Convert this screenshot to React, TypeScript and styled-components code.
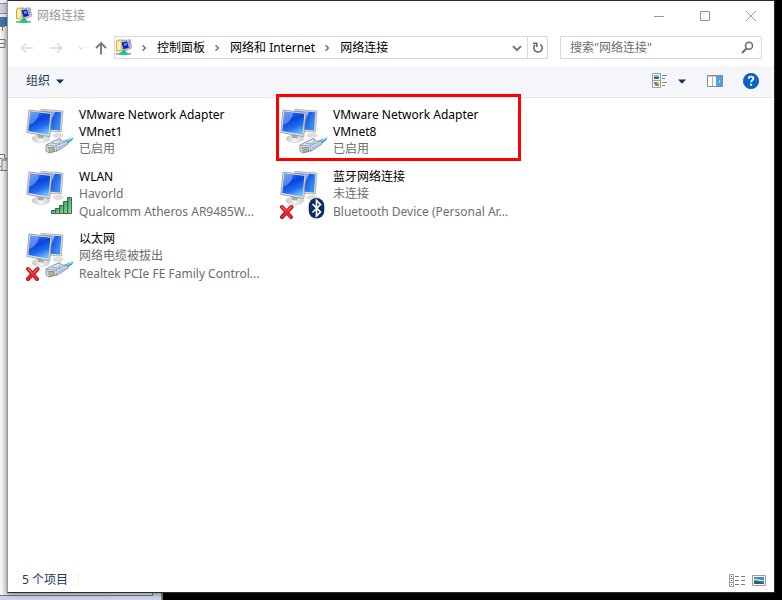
import React from "react";
import styled, { createGlobalStyle } from "styled-components";

const GlobalStyle = createGlobalStyle`
  *, *::before, *::after { box-sizing: border-box; }
  body {
    margin: 0;
    background: #000;
    font-family: "Noto Sans", "Noto Sans CJK SC", sans-serif;
    font-size: 12px;
    color: #000;
  }
  button, input {
    font: inherit;
    color: inherit;
    margin: 0;
    padding: 0;
    border: 0;
    background: transparent;
  }
  svg { display: block; flex: none; }
`;

const Desktop = styled.div`
  position: relative;
  display: flex;
  min-height: 100vh;
  padding: 0 7px 7px 7px;
  background: #000;
  overflow: hidden;
`;

const BackWindow = styled.div`
  position: absolute;
  inset: 0 auto 0 0;
  width: 163px;
  display: flex;
  flex-direction: column;
  background: #ccd4e9;
  border-right: 2px solid #777;
`;

const BackTab = styled.div`
  height: 17px;
  border-top: 3px solid #eef0f5;
  border-bottom: 3px solid #e8ebf2;
  background: #c9d0e2;
  box-shadow: inset 0 1px 0 #8b8f99, inset 0 -1px 0 #8b8f99;
`;

const BackSelection = styled.div`
  height: 9px;
  background: #4173ab;
`;

const BackPane = styled.div`
  flex: 1;
  margin: 0 8px 4px 0;
  border: solid #777b86;
  border-width: 0 1px 1px 0;
  background: linear-gradient(to right, #f8f8f8, #dcdcdc 8px, #e4e4e4);
`;

const Window = styled.main`
  position: relative;
  flex: 1;
  min-width: 0;
  display: flex;
  flex-direction: column;
  background: #fff;
  border: 1px solid #2b2b2d;
  border-left-color: #989898;
  box-shadow: 0 1px 5px rgba(0, 0, 0, 0.45);
`;

const TitleBar = styled.header`
  display: flex;
  align-items: center;
  height: 29px;
  padding-left: 8px;
  gap: 5px;
`;

const Title = styled.h1`
  flex: 1;
  margin: 0;
  font-size: 12px;
  font-weight: 400;
  line-height: 18px;
  color: #999;
`;

const WindowButton = styled.button`
  width: 46px;
  height: 29px;
  display: grid;
  place-items: center;
`;

const WindowButtons = styled.div`
  display: flex;
`;

const NavBar = styled.nav`
  display: flex;
  align-items: center;
  height: 36px;
  padding: 0 12px 1px;
`;

const NavButton = styled.button<{ $width: number; $before?: number }>`
  width: ${(p) => p.$width}px;
  margin-left: ${(p) => p.$before ?? 0}px;
  height: 22px;
  display: grid;
  place-items: center;
`;

const AddressBar = styled.div`
  flex: 1;
  min-width: 0;
  display: flex;
  align-items: center;
  height: 23px;
  margin: 0 12px 0 4px;
  padding-left: 1px;
  border: 1px solid #d9d9d9;
`;

const Crumbs = styled.ol`
  flex: 1;
  min-width: 0;
  display: flex;
  align-items: center;
  margin: 0;
  padding: 0;
  list-style: none;
  white-space: nowrap;
`;

const Crumb = styled.li`
  display: flex;
  align-items: center;
`;

const CrumbLink = styled.a`
  color: #000;
  text-decoration: none;
  line-height: 18px;
`;

const Chevron = styled.span`
  width: 25px;
  padding-right: 2px;
  display: grid;
  place-items: center;
`;

const RefreshButton = styled.button`
  width: 20px;
  height: 21px;
  display: grid;
  place-items: center;
  border-left: 1px solid #d9d9d9;
`;

const SearchBox = styled.label`
  display: flex;
  align-items: center;
  width: 202px;
  height: 23px;
  padding: 0 7px 0 9px;
  border: 1px solid #d9d9d9;
`;

const SearchInput = styled.input`
  flex: 1;
  min-width: 0;
  height: 18px;
  outline: none;
  &::placeholder { color: #6d6d6d; opacity: 1; }
`;

const Toolbar = styled.div`
  display: flex;
  align-items: center;
  height: 32px;
  padding: 0 15px 1px 18px;
  background: #f4f6f9;
  border-bottom: 1px solid #e6e7e9;
`;

const OrganizeButton = styled.button`
  display: flex;
  align-items: center;
  gap: 6px;
  margin-right: auto;
  line-height: 18px;
  color: #1e395b;
`;

const ToolButton = styled.button<{ $gap: number }>`
  margin-left: ${(p) => p.$gap}px;
`;

const Content = styled.section`
  flex: 1;
  padding: 7px 12px 0 16px;
`;

const Connections = styled.ul`
  display: grid;
  grid-template-columns: repeat(auto-fill, 254px);
  grid-auto-rows: 62px;
  margin: 0;
  padding: 0;
  list-style: none;
`;

const Connection = styled.li`
  position: relative;
  display: flex;
  gap: 3px;
`;

const ConnectionText = styled.div`
  flex: 1;
  min-width: 0;
  padding-top: 1px;
`;

const ConnectionName = styled.div`
  max-width: 170px;
  line-height: 17px;
`;

const ConnectionDetail = styled.div`
  max-width: 190px;
  line-height: 18px;
  color: #6d6d6d;
  white-space: nowrap;
`;

const Marker = styled.div`
  position: absolute;
  inset: -11px 11px 6px -2px;
  border: 3px solid #f00;
  pointer-events: none;
`;

const StatusBar = styled.footer`
  display: flex;
  align-items: center;
  height: 24px;
  padding: 0 8px 0 14px;
  color: #1e395b;
`;

const StatusCount = styled.span`
  padding-right: 10px;
  line-height: 14px;
  border-right: 1px solid #f0f0f0;
`;

const ViewButtons = styled.div`
  display: flex;
  align-items: center;
  gap: 6px;
  margin-left: auto;
`;

function NetworkFolderIcon() {
  return (
    <svg width="16" height="17" viewBox="0 0 16 17">
      <path d="M.5 2.500V12h9V2.500L8 1H1.500z" fill="#f7df7d" stroke="#bd9a37" strokeWidth=".8" />
      <path d="M1.500 3h3v8h-3z" fill="#fff2ac" />
      <path d="M6 1.500 14.500.8l1 8.400-5.800 2.300L5.500 10z" fill="#c7cbd5" stroke="#8f949f" strokeWidth=".7" />
      <path d="m5.500 3.500 5.500-1.300 2 6.500-5.500 1.500z" fill="#0d22b8" />
      <path d="m7.500 4.500 3-.8.800 2.500-3 .8z" fill="#5d91ff" />
      <path d="M12 2.500 14.200 2v6l-1.200 1z" fill="#9aa3b5" />
      <path d="M0 14h15v1.800H0z" fill="#9ba8a4" />
      <path d="M6 11.500h3.500v1.500H11v3H4.500v-3H6z" fill="#12c171" />
      <path d="M3 14h9.500v1.500H3z" fill="#15d67f" />
    </svg>
  );
}

function ArrowIcon({ dir }: { dir: "left" | "right" | "up" }) {
  const turn = { left: 0, right: 180, up: 90 }[dir];
  const up = dir === "up";
  return (
    <svg width="14" height="14" viewBox="0 0 14 14">
      <path
        d={up ? "M2 7h11.500M7 2 2 7 7 12" : "M1.500 7H13M6 2.500 1.500 7 6 11.500"}
        transform={`rotate(${turn} 7 7)`}
        fill="none"
        stroke={up ? "#787878" : "#dcdcdc"}
        strokeWidth={up ? 1.9 : 1.6}
      />
    </svg>
  );
}

function SmallChevron({ down, color, size }: { down?: boolean; color: string; size: number }) {
  return (
    <svg width={size} height={size} viewBox="0 0 8 8">
      <path d={down ? "M.8 2.500 4 5.700 7.200 2.500" : "M2.500 1.200 5.300 4 2.500 6.800"} fill="none" stroke={color} strokeWidth="1.600" />
    </svg>
  );
}

function Triangle() {
  return (
    <svg width="8" height="5" viewBox="0 0 8 5">
      <path d="M0 .5h8L4 4.700z" fill="#17305a" />
    </svg>
  );
}

function MonitorPair() {
  return (
    <>
      <ellipse cx="34" cy="30.500" rx="5.500" ry="2.600" fill="#dedede" />
      <path d="M17 4.300 39 6l-1.600 21L17 26z" fill="#dddcd8" stroke="#a3a29e" strokeWidth=".7" />
      <path d="m18.500 5.800 18.800 1.500L36 25.600 19 24z" fill="url(#screenBack)" />
      <path d="m13 28 7.500 1 .5 5h-8z" fill="#b4b4b4" />
      <ellipse cx="16.800" cy="33.800" rx="8.800" ry="3.800" fill="url(#base)" stroke="#c4c4c4" strokeWidth=".5" />
      <path d="m13.500 28.500 6.500 1-.5 4-5.500-.5z" fill="#a9a9a9" />
      <path d="m5 5 22.700 2.700-1.900 24L2.800 27.400z" fill="#e4e3df" stroke="#92918e" strokeWidth=".8" />
      <path d="m6.300 6.500 20 2.300-1.700 21L4.300 26z" fill="url(#screen)" />
      <path d="m6.300 6.500 9 1C14.500 13 11 18 5 20z" fill="#bfe0ff" opacity=".4" />
    </>
  );
}

function Plug() {
  return (
    <g strokeLinejoin="round">
      <path d="m38 38 5-3.500 6.500-2-1.500 3-7 5z" fill="#36a9d7" />
      <path d="m41 37 7-3.500" stroke="#a9e5fa" strokeWidth="1" />
      <path d="m22 40 9-4.500 5-2 1.200 2.500 5.800 0 1 3-9 6-10 3-3-2z" fill="#dbe5f2" stroke="#647b9c" strokeWidth=".8" />
      <path d="m23 40.500 8.500.5 11-4.500M32 41l1 6M28 38.500l7 .5 1-3" fill="none" stroke="#7187a6" strokeWidth=".7" />
      <path d="m33.500 42 9-4 .5 2-9 4.500z" fill="#a8bfdc" />
      <path d="M23.500 42h7l.5 5-6 .5z" fill="#70839c" />
      <path d="M25 42.500v4M27 42.500v4.500M29 42.500v4" stroke="#f0dd80" strokeWidth="1" />
    </g>
  );
}

function Signal() {
  return (
    <g fill="url(#bar)" stroke="#1d6b3a" strokeWidth=".9">
      <path d="M27.500 43.500h4v3h-4z" />
      <path d="M31.500 41.500h4v5h-4z" />
      <path d="M35.500 38.500h4v8h-4z" />
      <path d="M39.500 34.500h4v12h-4z" />
      <path d="M43.500 30.500h4v16h-4z" />
    </g>
  );
}

function Cross() {
  return (
    <g strokeLinecap="round">
      <path d="m4 40 9 10M13.500 40 4 50" stroke="#a60d12" strokeWidth="4" />
      <path d="m4 40 9 10M13.500 40 4 50" stroke="#e8262d" strokeWidth="2.800" />
      <path d="m4 39.800 3.500 3.600M13.300 39.800 10 43.400" stroke="#ff8a86" strokeWidth="1" />
    </g>
  );
}

function Bluetooth() {
  return (
    <>
      <rect x="30.700" y="31" width="15.600" height="20.600" rx="7.800" fill="#0a2d61" />
      <path d="m34.500 37 8 8-4 4V33.500l4 4-8 8" fill="none" stroke="#fff" strokeWidth="1.700" />
    </>
  );
}

type Badge = "plug" | "signal" | "bluetooth";

function ConnectionIcon({ badge, broken }: { badge: Badge; broken?: boolean }) {
  return (
    <svg width="52" height="52" viewBox="0 0 52 52">
      <MonitorPair />
      {badge === "plug" && <Plug />}
      {badge === "signal" && <Signal />}
      {badge === "bluetooth" && <Bluetooth />}
      {broken && <Cross />}
    </svg>
  );
}

function Gradients() {
  return (
    <svg width="0" height="0">
      <defs>
        <linearGradient id="screen" x1=".2" y1="0" x2=".6" y2="1">
          <stop offset="0" stopColor="#2a72ee" />
          <stop offset=".4" stopColor="#0b45dc" />
          <stop offset=".7" stopColor="#1f6df0" />
          <stop offset="1" stopColor="#74bcff" />
        </linearGradient>
        <linearGradient id="screenBack" x1="0" y1="0" x2="1" y2=".5">
          <stop offset="0" stopColor="#3f86f2" />
          <stop offset=".5" stopColor="#8fc2fb" />
          <stop offset=".6" stopColor="#1a5ce6" />
          <stop offset="1" stopColor="#3b8df5" />
        </linearGradient>
        <linearGradient id="base" x1="0" y1="0" x2="1" y2="0">
          <stop offset="0" stopColor="#c4c4c4" />
          <stop offset=".5" stopColor="#f4f4f4" />
          <stop offset="1" stopColor="#cfcfcf" />
        </linearGradient>
        <linearGradient id="bar" x1="0" y1="0" x2="1" y2="1">
          <stop offset="0" stopColor="#35935a" />
          <stop offset="1" stopColor="#a5d8ae" />
        </linearGradient>
      </defs>
    </svg>
  );
}

interface ConnectionData {
  name: string;
  details: string[];
  badge: Badge;
  broken?: boolean;
  marked?: boolean;
}

const connections: ConnectionData[] = [
  { name: "VMware Network Adapter VMnet1", details: ["已启用"], badge: "plug" },
  { name: "VMware Network Adapter VMnet8", details: ["已启用"], badge: "plug", marked: true },
  { name: "WLAN", details: ["Havorld", "Qualcomm Atheros AR9485W..."], badge: "signal" },
  { name: "蓝牙网络连接", details: ["未连接", "Bluetooth Device (Personal Ar..."], badge: "bluetooth", broken: true },
  { name: "以太网", details: ["网络电缆被拔出", "Realtek PCIe FE Family Control..."], badge: "plug", broken: true },
];

const crumbs = ["控制面板", "网络和 Internet", "网络连接"];

export default function App() {
  return (
    <Desktop lang="zh-CN">
      <GlobalStyle />
      <BackWindow aria-hidden="true">
        <BackTab />
        <BackSelection />
        <BackPane>
          <svg width="8" height="150" viewBox="0 0 8 150" fill="none" stroke="#777">
            <path d="M0 .5h5M2.500 1v4M0 13.500h5v8H0M0 17.500h4M0 128.500h4.500v4h3M0 132.500h2v8H0M2 134h6M0 144.500h8M2 141v3" />
          </svg>
        </BackPane>
      </BackWindow>

      <Window>
        <Gradients />
        <TitleBar>
          <NetworkFolderIcon />
          <Title>网络连接</Title>
          <WindowButtons>
            <WindowButton aria-label="最小化">
              <svg width="10" height="10" viewBox="0 0 10 10" stroke="#999"><path d="M0 5.500h10" /></svg>
            </WindowButton>
            <WindowButton aria-label="最大化">
              <svg width="10" height="10" viewBox="0 0 10 10" fill="none" stroke="#999"><path d="M.5.500h9v9h-9z" /></svg>
            </WindowButton>
            <WindowButton aria-label="关闭">
              <svg width="10" height="10" viewBox="0 0 10 10" stroke="#999"><path d="m0 0 10 10M10 0 0 10" /></svg>
            </WindowButton>
          </WindowButtons>
        </TitleBar>

        <NavBar aria-label="导航">
          <NavButton $width={14} aria-label="后退"><ArrowIcon dir="left" /></NavButton>
          <NavButton $width={44} aria-label="前进"><ArrowIcon dir="right" /></NavButton>
          <NavButton $width={6} aria-label="最近浏览的位置"><SmallChevron down color="#dcdcdc" size={6} /></NavButton>
          <NavButton $width={18} $before={8} aria-label="向上"><ArrowIcon dir="up" /></NavButton>
          <AddressBar>
            <NetworkFolderIcon />
            <Crumbs>
              {crumbs.map((c) => (
                <Crumb key={c}>
                  <Chevron><SmallChevron color="#777" size={8} /></Chevron>
                  <CrumbLink href="#">{c}</CrumbLink>
                </Crumb>
              ))}
            </Crumbs>
            <NavButton $width={20} aria-label="以前的位置"><SmallChevron down color="#707070" size={10} /></NavButton>
            <RefreshButton aria-label="刷新">
              <svg width="12" height="12" viewBox="0 0 12 12" fill="none" stroke="#6a6a6a" strokeWidth="1.600">
                <path d="M8.300 2.300A4.200 4.200 0 1 1 3.200 2.700M1 1.200h3.800V5" />
              </svg>
            </RefreshButton>
          </AddressBar>
          <SearchBox>
            <SearchInput type="text" aria-label="搜索" placeholder={'搜索"网络连接"'} />
            <svg width="13" height="13" viewBox="0 0 13 13" fill="none" stroke="#6d6d6d">
              <circle cx="8" cy="4.800" r="3.500" strokeWidth="1.500" />
              <path d="M5.500 7.500 1 12" strokeWidth="2" />
            </svg>
          </SearchBox>
        </NavBar>

        <Toolbar>
          <OrganizeButton>组织<Triangle /></OrganizeButton>
          <ToolButton $gap={0} aria-label="更改视图">
            <svg width="16" height="16" viewBox="0 0 16 16">
              <path d="M.5.500h8v14h-8zM.5 7.500h8" fill="#fff" stroke="#9b9b9b" />
              <path d="M2 2h5v2H2z" fill="#7bb4e6" />
              <path d="M2 4h5v2H2z" fill="#2d609b" />
              <path d="M2 9h3v2H2z" fill="#d15f46" />
              <path d="M5 9h2v2H5z" fill="#e5b343" />
              <path d="M3 11h4v2H3z" fill="#5c9c58" />
              <path d="M10 2.500h5M10 5.500h3M10 9.500h5M10 12.500h3" stroke="#858585" />
            </svg>
          </ToolButton>
          <ToolButton $gap={10} aria-label="更多选项"><Triangle /></ToolButton>
          <ToolButton $gap={21} aria-label="显示预览窗格">
            <svg width="16" height="12" viewBox="0 0 16 12">
              <path d="M.5.500h15v11H.5z" fill="#fff" stroke="#8c8c8c" />
              <path d="M0 0h16v1.500H0z" fill="#8c8c8c" />
              <path d="M5.500 2v9" stroke="#b0b0b0" />
              <path d="M9 1h6v10H9z" fill="#4ba3ee" />
              <path d="M12 5h1v3h-1z" fill="#b5dcfc" />
            </svg>
          </ToolButton>
          <ToolButton $gap={20} aria-label="帮助">
            <svg width="16" height="16" viewBox="0 0 16 16">
              <circle cx="8" cy="8" r="7.700" fill="#0a63c6" stroke="#084288" strokeWidth=".6" />
              <path d="M5.700 5.700C5.700 2.900 10.400 3 10.400 5.500 10.400 7.300 8.100 7.300 8.100 9.300" fill="none" stroke="#fff" strokeWidth="1.800" />
              <path d="M7.100 10.700h2v2h-2z" fill="#fff" />
            </svg>
          </ToolButton>
        </Toolbar>

        <Content>
          <Connections>
            {connections.map((c) => (
              <Connection key={c.name}>
                <ConnectionIcon badge={c.badge} broken={c.broken} />
                <ConnectionText>
                  <ConnectionName>{c.name}</ConnectionName>
                  {c.details.map((d) => (
                    <ConnectionDetail key={d}>{d}</ConnectionDetail>
                  ))}
                </ConnectionText>
                {c.marked && <Marker />}
              </Connection>
            ))}
          </Connections>
        </Content>

        <StatusBar>
          <StatusCount>5 个项目</StatusCount>
          <ViewButtons>
            <ToolButton $gap={0} aria-label="详细信息">
              <svg width="17" height="13" viewBox="0 0 17 13">
                <path d="M.5.500h4v12h-4zM.5 4.500h4M.5 8.500h4" fill="#fff" stroke="#9b9b9b" />
                <path d="M2 2h1v1H2zM2 6h1v1H2zM2 10h1v1H2z" fill="#555" />
                <path d="M6 2.500h4M12 2.500h4M6 6.500h4M12 6.500h4M6 10.500h4M12 10.500h4" stroke="#7d7d7d" />
              </svg>
            </ToolButton>
            <ToolButton $gap={0} aria-label="大图标">
              <svg width="14" height="11" viewBox="0 0 14 11">
                <path d="M.5.500h13v10H.5z" fill="#fff" stroke="#9b9b9b" />
                <path d="M2 2h10v7H2z" fill="#3c87cf" />
                <path d="M2 4c3-1 5 1 10 1v1H2z" fill="#b9dcf4" />
                <path d="M2 6c2-1 5 0 6 1l4 1v1H2z" fill="#2b6659" />
              </svg>
            </ToolButton>
          </ViewButtons>
        </StatusBar>
      </Window>
    </Desktop>
  );
}
